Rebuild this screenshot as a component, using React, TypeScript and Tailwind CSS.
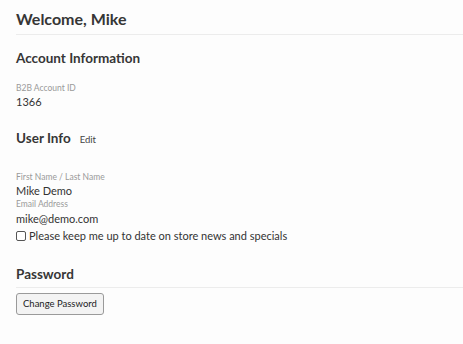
import React from "react";

export default function App() {
  return (
    <div className="min-h-[344px] w-[463px] bg-[#fdfdfd] pl-4 pt-[9px] text-[#333] [font-family:Lato,'Noto_Sans',sans-serif]">
      <h1 className="border-b border-[#ececec] pb-[5px] text-[16px] leading-[20px] font-bold text-[#363636]">Welcome, Mike</h1>

      <h2 className="mt-[14px] text-[13.5px] leading-[18px] font-bold text-[#363636]">Account Information</h2>
      <div className="mt-[16px] text-[8.5px] leading-[11px] text-[#9a9a9a]">B2B Account ID</div>
      <div className="mt-[0px] text-[11px] leading-[15px] text-[#333]">1366</div>

      <div className="mt-[20px] flex items-baseline gap-[9px]">
        <h2 className="text-[13.5px] leading-[18px] font-bold text-[#363636]">User Info</h2>
        <span className="text-[9.5px] leading-[12px] text-[#444]">Edit</span>
      </div>

      <div className="mt-[25px] text-[8.5px] leading-[11px] text-[#9a9a9a]">First Name / Last Name</div>
      <div className="mt-[0px] text-[11px] leading-[15px] text-[#333]">Mike Demo</div>
      <div className="mt-[1px] text-[8.5px] leading-[11px] text-[#9a9a9a]">Email Address</div>
      <div className="mt-[1px] text-[11px] leading-[15px] text-[#333]">mike@demo.com</div>

      <label className="mt-[2px] flex items-center gap-[3px] text-[11px] leading-[15px] text-[#333]">
        <span className="inline-block h-[10px] w-[10px] rounded-[2px] border border-[#555] bg-white" />
        <span>Please keep me up to date on store news and specials</span>
      </label>

      <h2 className="mt-[22px] border-b border-[#ececec] pb-[4px] text-[13.5px] leading-[18px] font-bold text-[#363636]">Password</h2>
      <button className="mt-[5px] rounded-[3px] border border-[#9a9a9a] bg-[#f3f3f3] px-[6px] py-[4px] text-[9.5px] leading-[12px] text-[#222]">
        Change Password
      </button>
    </div>
  );
}
